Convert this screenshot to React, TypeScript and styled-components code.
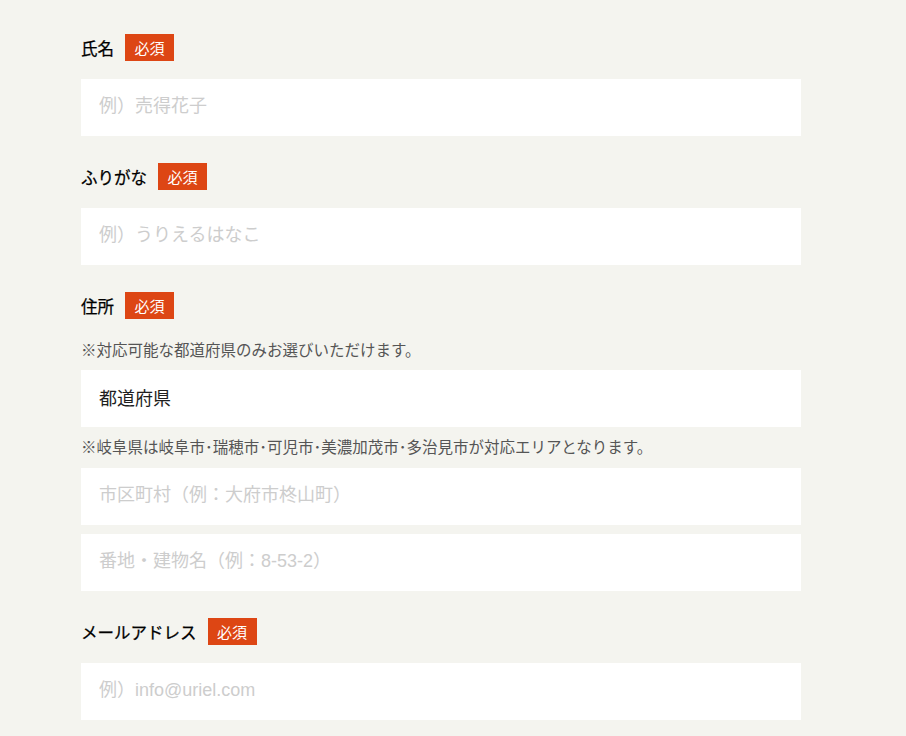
import styled, { createGlobalStyle } from "styled-components"

const GlobalStyle = createGlobalStyle`
    html, body {
        margin: 0;
        padding: 0;
        background-color: #f4f4ef;
    }
    body {
        font-family: "Liberation Sans", "Noto Sans CJK JP", sans-serif;
        color: #222;
    }
`

const Container = styled.div`
    min-height: 736px;
    background-color: #f4f4ef;
`
const Form = styled.form`
    width: 720px;
    padding: 34px 0 0 81px;
    display: flex;
    flex-direction: column;
    gap: 27px;
`
const Field = styled.div`
    display: flex;
    flex-direction: column;
`
const LabelRow = styled.div`
    display: flex;
    align-items: center;
    height: 27px;
    margin-bottom: 18px;
`
const Label = styled.label`
    font-family: "Noto Sans CJK JP", sans-serif;
    font-size: 16.5px;
    color: #000;
    -webkit-text-stroke: 0.25px #000;
`
const Required = styled.span`
    margin-left: 11px;
    height: 27px;
    padding: 0 9.5px;
    display: inline-flex;
    align-items: center;
    background-color: #dd4614;
    color: #fff;
    font-family: "Noto Sans CJK JP", sans-serif;
    font-size: 15px;
`
const Note = styled.p`
    margin: 0 0 ${props => props.$gap}px;
    font-family: "Noto Sans CJK JP", sans-serif;
    font-size: 15.5px;
    line-height: 24px;
    color: #555;
`
const Input = styled.input`
    box-sizing: border-box;
    width: 100%;
    height: 57px;
    margin-bottom: ${props => props.$gap || 0}px;
    padding: 0 18px 3px;
    border: none;
    outline: none;
    background-color: #fff;
    font-family: "Liberation Sans", "Noto Sans CJK JP", sans-serif;
    font-size: 18px;
    color: #222;

    &::placeholder {
        color: #cdcdcd;
    }
`
const Select = styled.select`
    box-sizing: border-box;
    width: 100%;
    height: 57px;
    margin-bottom: 7px;
    padding: 0 18px 3px;
    border: none;
    border-radius: 0;
    outline: none;
    appearance: none;
    background-color: #fff;
    font-family: "Noto Sans CJK JP", sans-serif;
    font-size: 18px;
    color: #1e1e1e;
`

const RequiredLabel = ({ children }: { children: string }) => (
    <LabelRow>
        <Label>{children}</Label>
        <Required>必須</Required>
    </LabelRow>
)

const App = () => {
    return (
        <Container>
            <GlobalStyle />
            <Form>
                <Field>
                    <RequiredLabel>氏名</RequiredLabel>
                    <Input placeholder="例）売得花子" />
                </Field>
                <Field>
                    <RequiredLabel>ふりがな</RequiredLabel>
                    <Input placeholder="例）うりえるはなこ" />
                </Field>
                <Field>
                    <RequiredLabel>住所</RequiredLabel>
                    <Note $gap={9}>※対応可能な都道府県のみお選びいただけます。</Note>
                    <Select defaultValue="">
                        <option value="">都道府県</option>
                        <option value="gifu">岐阜県</option>
                        <option value="aichi">愛知県</option>
                    </Select>
                    <Note $gap={10}>※岐阜県は岐阜市･瑞穂市･可児市･美濃加茂市･多治見市が対応エリアとなります。</Note>
                    <Input $gap={9} placeholder="市区町村（例：大府市柊山町）" />
                    <Input placeholder="番地・建物名（例：8-53-2）" />
                </Field>
                <Field>
                    <RequiredLabel>メールアドレス</RequiredLabel>
                    <Input type="email" placeholder="例）info@uriel.com" />
                </Field>
            </Form>
        </Container>
    )
}

export default App
